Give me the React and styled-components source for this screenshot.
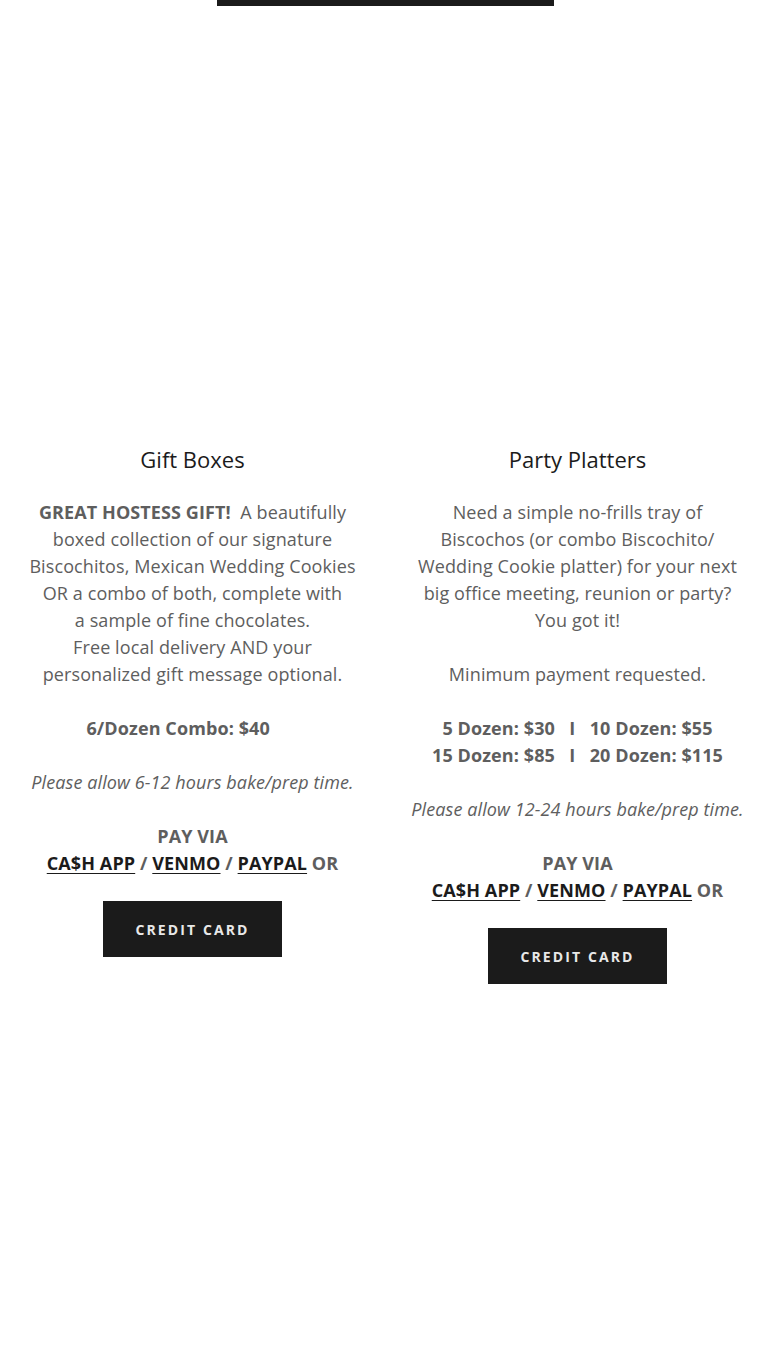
import React from "react";
import styled, { createGlobalStyle } from "styled-components";

const GlobalStyle = createGlobalStyle`
  html, body {
    margin: 0;
    padding: 0;
    background: #ffffff;
  }
  body {
    font-family: 'Open Sans', 'Liberation Sans', sans-serif;
    -webkit-font-smoothing: antialiased;
  }
`;

const Page = styled.div`
  width: 770px;
  min-height: 1360px;
  background: #fff;
  display: flex;
  flex-direction: column;
  align-items: center;
`;

const TopButtonEdge = styled.div`
  width: 337px;
  height: 6px;
  background: #1b1b1b;
`;

const Grid = styled.section`
  width: 100%;
  display: grid;
  grid-template-columns: 1fr 1fr;
  padding-top: 441px;
`;

const Column = styled.div`
  display: flex;
  flex-direction: column;
  align-items: center;
  padding: 0 16px;
  text-align: center;
`;

const Heading = styled.h4`
  margin: 0 0 28px;
  font-size: 22px;
  line-height: 24px;
  font-weight: 400;
  color: #1b1b1b;
`;

const Body = styled.div`
  font-size: 18px;
  line-height: 27px;
  letter-spacing: 0.1px;
  color: #5e5e5e;
  white-space: nowrap;

  p {
    margin: 0;
    min-height: 27px;
  }

  strong {
    font-weight: 700;
  }

  em {
    font-style: italic;
  }
`;

const PayLink = styled.a`
  color: #1b1b1b;
  font-weight: 700;
  text-decoration: underline;
  text-underline-offset: 3px;
`;

const Button = styled.a`
  margin-top: 24px;
  height: 56px;
  padding: 0 32px;
  display: inline-flex;
  align-items: center;
  justify-content: center;
  background: #1b1b1b;
  color: #e8e8e8;
  font-size: 14px;
  font-weight: 700;
  letter-spacing: 2.1px;
  text-transform: uppercase;
  text-decoration: none;
`;

function PayVia() {
  return (
    <>
      <p><strong>PAY VIA</strong></p>
      <p>
        <strong>
          <PayLink href="#">CA$H APP</PayLink> / <PayLink href="#">VENMO</PayLink> /{" "}
          <PayLink href="#">PAYPAL</PayLink> OR
        </strong>
      </p>
    </>
  );
}

export default function App() {
  return (
    <>
      <GlobalStyle />
      <Page>
        <TopButtonEdge />
        <Grid>
          <Column>
            <Heading>Gift Boxes</Heading>
            <Body>
              <p><strong>GREAT HOSTESS GIFT!</strong>&nbsp; A beautifully</p>
              <p>boxed collection of our signature</p>
              <p>Biscochitos, Mexican Wedding Cookies</p>
              <p>OR a combo of both, complete with</p>
              <p>a sample of fine chocolates.</p>
              <p>Free local delivery AND your</p>
              <p>personalized gift message optional.</p>
              <p />
              <p><strong>6/Dozen Combo: $40&nbsp;&nbsp;&nbsp;&nbsp;&nbsp;&nbsp;</strong></p>
              <p />
              <p><em>Please allow 6-12 hours bake/prep time.</em></p>
              <p />
              <PayVia />
            </Body>
            <Button href="#">Credit Card</Button>
          </Column>
          <Column>
            <Heading>Party Platters</Heading>
            <Body>
              <p>Need a simple no-frills tray of</p>
              <p>Biscochos (or combo Biscochito/</p>
              <p>Wedding Cookie platter) for your next</p>
              <p>big office meeting, reunion or party?</p>
              <p>You got it!</p>
              <p />
              <p>Minimum payment requested.</p>
              <p />
              <p><strong>5 Dozen: $30 &nbsp; I &nbsp; 10 Dozen: $55</strong></p>
              <p><strong>15 Dozen: $85 &nbsp; I &nbsp; 20 Dozen: $115</strong></p>
              <p />
              <p><em>Please allow 12-24 hours bake/prep time.</em></p>
              <p />
              <PayVia />
            </Body>
            <Button href="#">Credit Card</Button>
          </Column>
        </Grid>
      </Page>
    </>
  );
}
